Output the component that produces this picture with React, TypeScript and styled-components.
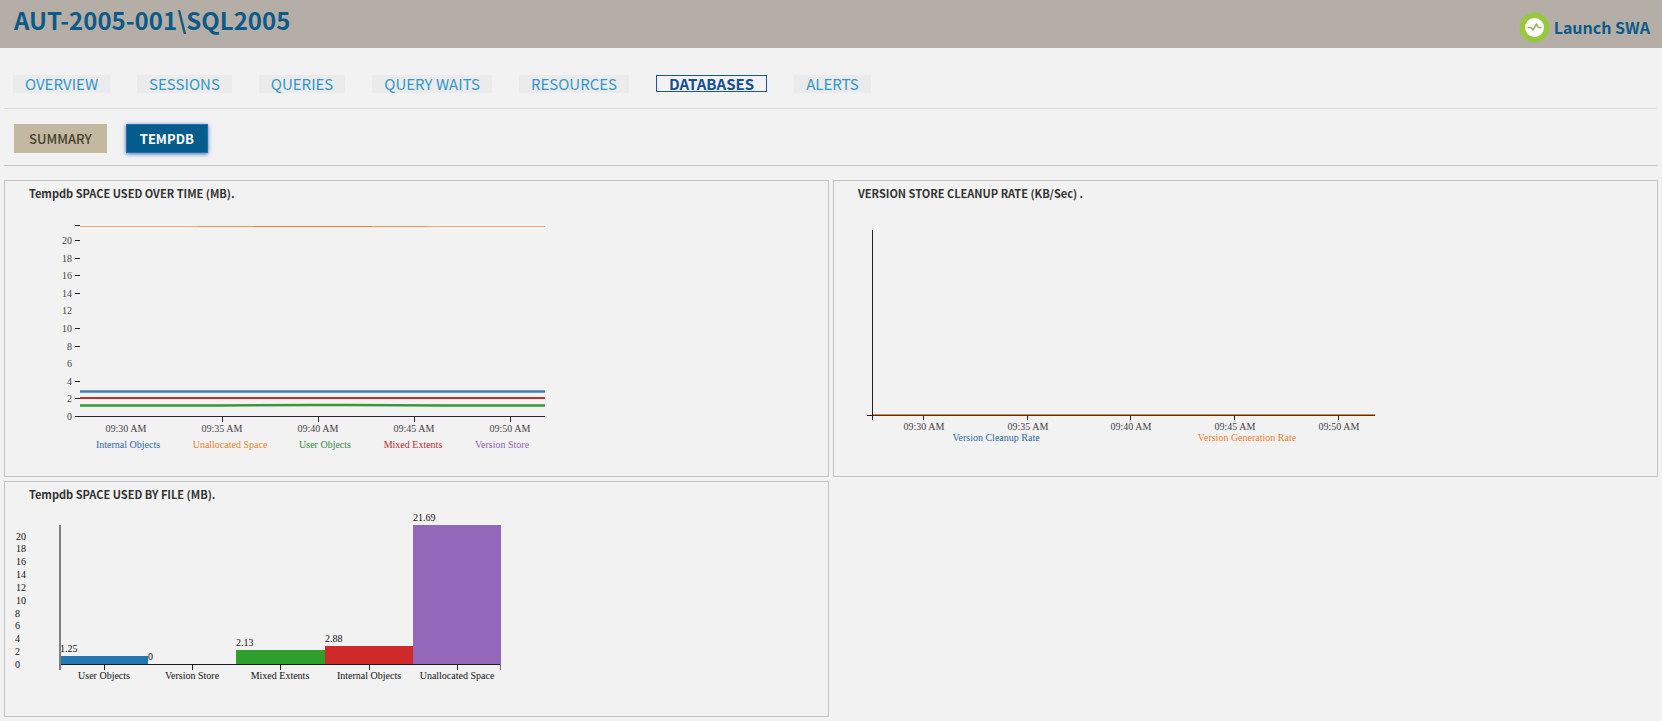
import React from "react";
import styled, { createGlobalStyle } from "styled-components";

const GlobalStyle = createGlobalStyle`
  *, *::before, *::after { box-sizing: border-box; }
  body {
    margin: 0;
    background: #f2f2f2;
    font-family: "Noto Sans CJK SC", "Open Sans", sans-serif;
  }
`;

const Header = styled.header`
  display: flex;
  justify-content: space-between;
  height: 48px;
  padding: 0 12px 0 14px;
  background: #b5aea7;
`;

const ServerName = styled.h1`
  margin: 0;
  font-size: 24px;
  line-height: 40px;
  font-weight: 700;
  color: #0d5a87;
`;

const LaunchLink = styled.a`
  display: flex;
  align-items: center;
  gap: 4px;
  padding-top: 6px;
  font-size: 16px;
  line-height: 24px;
  font-weight: 700;
  color: #0d5a87;
  text-decoration: none;
`;

const Page = styled.main`
  padding: 0 4px 4px;
`;

const Tabs = styled.nav`
  display: flex;
  gap: 27px;
  height: 61px;
  padding: 27px 9px 0;
  border-bottom: 1px solid #dcdcdc;
`;

const Tab = styled.a<{ $active?: boolean }>`
  height: ${(p) => (p.$active ? 17 : 18)}px;
  padding: 0 12px;
  border: ${(p) => (p.$active ? "1px solid #1a5596" : "0")};
  background: ${(p) => (p.$active ? "transparent" : "#ebebeb")};
  font-size: 15px;
  line-height: ${(p) => (p.$active ? 15 : 18)}px;
  font-weight: ${(p) => (p.$active ? 700 : 400)};
  color: ${(p) => (p.$active ? "#174f93" : "#3397cb")};
  text-decoration: none;
  white-space: nowrap;
`;

const SubTabs = styled.div`
  display: flex;
  gap: 19px;
  height: 57px;
  padding: 15px 10px 0;
  border-bottom: 1px solid #c4c4c4;
`;

const SubTab = styled.button<{ $active?: boolean }>`
  height: 29px;
  padding: 0 ${(p) => (p.$active ? 13 : 15)}px;
  border: ${(p) => (p.$active ? "1px solid #2a6cb4" : "0")};
  background: ${(p) => (p.$active ? "#045c8c" : "#c3b9a1")};
  box-shadow: ${(p) => (p.$active ? "0 1px 4px #3b6fb5" : "none")};
  font-family: inherit;
  font-size: 13px;
  line-height: 20px;
  font-weight: ${(p) => (p.$active ? 700 : 500)};
  color: ${(p) => (p.$active ? "#ffffff" : "#45422f")};
`;

const Panels = styled.div`
  display: grid;
  grid-template-columns: 1fr 1fr;
  gap: 4px;
  margin-top: 14px;
`;

const Panel = styled.section`
  min-width: 0;
  border: 1px solid #c2c2c2;
`;

const PanelTitle = styled.h2`
  margin: 0;
  padding-left: 24px;
  font-size: 11px;
  line-height: 24px;
  font-weight: 700;
  color: #333333;
`;

const Chart = styled.svg`
  display: block;
  max-width: 100%;
  font-family: "Liberation Serif", serif;
  font-size: 10px;
`;

const TABS = ["OVERVIEW", "SESSIONS", "QUERIES", "QUERY WAITS", "RESOURCES", "DATABASES", "ALERTS"];
const TIMES = ["09:30 AM", "09:35 AM", "09:40 AM", "09:45 AM", "09:50 AM"];

function PulseIcon() {
  return (
    <svg width="31" height="31" viewBox="0 0 31 31" aria-hidden="true">
      <circle cx="15.5" cy="15.5" r="15" fill="#97c93f" />
      <circle cx="15.5" cy="15.5" r="9.5" fill="#fff" />
      <path
        d="M8.5 15.5H12L14 18L17.5 12L19.5 15.5H22.5"
        fill="none"
        stroke="#93b45a"
        strokeWidth="1.5"
        strokeLinejoin="round"
      />
    </svg>
  );
}

const SPACE_LEGEND = [
  { label: "Internal Objects", x: 123, color: "#2b6ca8" },
  { label: "Unallocated Space", x: 225, color: "#f07f2e" },
  { label: "User Objects", x: 320, color: "#2f8f35" },
  { label: "Mixed Extents", x: 408, color: "#c2292d" },
  { label: "Version Store", x: 497, color: "#8a62b8" },
];

function SpaceOverTimeChart() {
  const y = (v: number) => 211 - v * 8.8;
  const untickedValues = [12, 6];
  return (
    <Chart width="600" height="271" viewBox="0 0 600 271" role="img" aria-label="Tempdb space used over time">
      {[0, 2, 4, 6, 8, 10, 12, 14, 16, 18, 20].map((v) => (
        <g key={v}>
          <text x="67" y={Math.round(y(v)) + 4} textAnchor="end" fill="#444">
            {v}
          </text>
          {!untickedValues.includes(v) && (
            <rect x="70" y={Math.round(y(v))} width="5" height="1" fill="#222" />
          )}
        </g>
      ))}
      <rect x="70" y="20" width="5" height="1" fill="#222" />
      <path d="M75 21.5H540" stroke="#f5a868" />
      <path d="M193 21.5H422" stroke="#ee9a55" />
      <path d="M248 21.5H367" stroke="#e08433" />
      <path d="M75 186.5H540" stroke="#3a7fb4" strokeWidth="2.6" />
      <path d="M75 193H540" stroke="#c02c2e" strokeWidth="2.2" />
      <path d="M75 200.5H209L310 200H340L440 200.5H540" fill="none" stroke="#38993a" strokeWidth="2.4" />
      <rect x="75" y="211" width="465" height="1" fill="#2b2430" />
      {TIMES.map((t, i) => (
        <g key={t}>
          {i > 0 && <rect x={121 + i * 96} y="212" width="1" height="5" fill="#222" />}
          <text x={121 + i * 96} y="227" textAnchor="middle" fill="#444">
            {t}
          </text>
        </g>
      ))}
      {SPACE_LEGEND.map((s) => (
        <text key={s.label} x={s.x} y="243" textAnchor="middle" fill={s.color}>
          {s.label}
        </text>
      ))}
    </Chart>
  );
}

function CleanupRateChart() {
  return (
    <Chart width="600" height="271" viewBox="0 0 600 271" role="img" aria-label="Version store cleanup rate">
      <rect x="38" y="25" width="1" height="190" fill="#222" />
      <rect x="33" y="210" width="6" height="1" fill="#222" />
      <rect x="39" y="209" width="502" height="1" fill="#d98a45" />
      <rect x="39" y="210" width="502" height="1" fill="#5a2c0a" />
      {TIMES.map((t, i) => (
        <g key={t}>
          <rect x={89 + i * 104 - (i > 1 ? 1 : 0)} y="211" width="1" height="4" fill="#222" />
          <text x={90 + i * 104 - (i > 1 ? 1 : 0)} y="225" textAnchor="middle" fill="#444">
            {t}
          </text>
        </g>
      ))}
      <text x="162" y="236" textAnchor="middle" fill="#2b6ca8">
        Version Cleanup Rate
      </text>
      <text x="413" y="236" textAnchor="middle" fill="#f07f2e">
        Version Generation Rate
      </text>
    </Chart>
  );
}

const FILE_BARS = [
  { label: "User Objects", value: 1.25, color: "#2577b4" },
  { label: "Version Store", value: 0, color: "#ff7f0e" },
  { label: "Mixed Extents", value: 2.13, color: "#2f9e2d" },
  { label: "Internal Objects", value: 2.88, color: "#cf2a29" },
  { label: "Unallocated Space", value: 21.69, color: "#9368bb" },
];

function SpaceByFileChart() {
  const base = 158;
  const unit = 6.42;
  const barX = (i: number) => 55 + Math.round(i * 88.2);
  return (
    <Chart width="600" height="210" viewBox="0 0 600 210" role="img" aria-label="Tempdb space used by file">
      {[0, 2, 4, 6, 8, 10, 12, 14, 16, 18, 20].map((v) => (
        <text key={v} x={v > 9 ? 11 : 10} y={Math.round(162 - v * 6.42)} fill="#111">
          {v}
        </text>
      ))}
      {FILE_BARS.map((b, i) => {
        const height = Math.round(b.value * unit);
        return (
          <g key={b.label}>
            <rect x={barX(i)} y={base - height} width={barX(i + 1) - barX(i)} height={height} fill={b.color} />
            <text x={barX(i)} y={base - height - 4} fill="#111">
              {b.value}
            </text>
            <rect x={barX(i) + 44} y="159" width="1" height="5" fill="#222" />
            <text x={barX(i) + 44} y="173" textAnchor="middle" fill="#111">
              {b.label}
            </text>
          </g>
        );
      })}
      <rect x="55" y="158" width="441" height="1" fill="#1c1c1c" />
      <rect x="54" y="19" width="2" height="145" fill="#808080" />
      <rect x="495" y="158" width="1" height="6" fill="#777" />
    </Chart>
  );
}

export default function App() {
  return (
    <>
      <GlobalStyle />
      <Header>
        <ServerName>AUT-2005-001\SQL2005</ServerName>
        <LaunchLink href="#swa">
          <PulseIcon />
          Launch SWA
        </LaunchLink>
      </Header>
      <Page>
        <Tabs>
          {TABS.map((name) => (
            <Tab key={name} href="#" $active={name === "DATABASES"}>
              {name}
            </Tab>
          ))}
        </Tabs>
        <SubTabs>
          <SubTab type="button">SUMMARY</SubTab>
          <SubTab type="button" $active>
            TEMPDB
          </SubTab>
        </SubTabs>
        <Panels>
          <Panel>
            <PanelTitle>Tempdb SPACE USED OVER TIME (MB).</PanelTitle>
            <SpaceOverTimeChart />
          </Panel>
          <Panel>
            <PanelTitle>VERSION STORE CLEANUP RATE (KB/Sec) .</PanelTitle>
            <CleanupRateChart />
          </Panel>
          <Panel>
            <PanelTitle>Tempdb SPACE USED BY FILE (MB).</PanelTitle>
            <SpaceByFileChart />
          </Panel>
        </Panels>
      </Page>
    </>
  );
}
